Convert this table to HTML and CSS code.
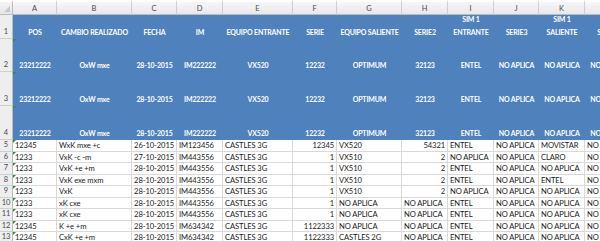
FILE: index.html
```html
<!DOCTYPE html>
<html lang="es">
<head>
<meta charset="utf-8">
<title>Hoja</title>
<link rel="stylesheet" href="styles.css">
</head>
<body>
<div class="sheet">
  <div class="corner"><span class="corner-tri"></span></div>
  <div class="ch">A</div><div class="ch">B</div><div class="ch">C</div><div class="ch">D</div><div class="ch">E</div><div class="ch">F</div><div class="ch">G</div><div class="ch">H</div><div class="ch">I</div><div class="ch">J</div><div class="ch">K</div><div class="ch">L</div>

  <div class="rh">1</div>
  <div class="hb">POS</div><div class="hb">CAMBIO REALIZADO</div><div class="hb">FECHA</div><div class="hb">IM</div><div class="hb">EQUIPO ENTRANTE</div><div class="hb">SERIE</div><div class="hb">EQUIPO SALIENTE</div><div class="hb">SERIE2</div><div class="hb">SIM 1<br>ENTRANTE</div><div class="hb">SERIE3</div><div class="hb">SIM 1<br>SALIENTE</div><div class="hb">SERIE4</div>

  <div class="rh">2</div>
  <div class="hb tcell"><span class="tri"></span>23212222</div><div class="hb">OxW mxe</div><div class="hb">28-10-2015</div><div class="hb">IM222222</div><div class="hb">VX520</div><div class="hb">12232</div><div class="hb">OPTIMUM</div><div class="hb">32123</div><div class="hb">ENTEL</div><div class="hb">NO APLICA</div><div class="hb">NO APLICA</div><div class="hb">NO APLICA</div>

  <div class="rh">3</div>
  <div class="hb tcell"><span class="tri"></span>23212222</div><div class="hb">OxW mxe</div><div class="hb">28-10-2015</div><div class="hb">IM222222</div><div class="hb">VX520</div><div class="hb">12232</div><div class="hb">OPTIMUM</div><div class="hb">32123</div><div class="hb">ENTEL</div><div class="hb">NO APLICA</div><div class="hb">NO APLICA</div><div class="hb">NO APLICA</div>

  <div class="rh">4</div>
  <div class="hb tcell"><span class="tri"></span>23212222</div><div class="hb">OxW mxe</div><div class="hb">28-10-2015</div><div class="hb">IM222222</div><div class="hb">VX520</div><div class="hb">12232</div><div class="hb">OPTIMUM</div><div class="hb">32123</div><div class="hb">ENTEL</div><div class="hb">NO APLICA</div><div class="hb">NO APLICA</div><div class="hb">NO APLICA</div>

  <div class="rh sm">5</div>
  <div class="c tcell"><span class="tri"></span>12345</div><div class="c">WxK mxe +c</div><div class="c r">26-10-2015</div><div class="c">IM123456</div><div class="c">CASTLES 3G</div><div class="c r">12345</div><div class="c">VX520</div><div class="c r">54321</div><div class="c">ENTEL</div><div class="c">NO APLICA</div><div class="c">MOVISTAR</div><div class="c">NO APLICA</div>

  <div class="rh sm">6</div>
  <div class="c tcell"><span class="tri"></span>1233</div><div class="c">VxK -c -m</div><div class="c r">27-10-2015</div><div class="c">IM443556</div><div class="c">CASTLES 3G</div><div class="c r">1</div><div class="c">VX510</div><div class="c r">2</div><div class="c">NO APLICA</div><div class="c">NO APLICA</div><div class="c">CLARO</div><div class="c">NO APLICA</div>

  <div class="rh sm">7</div>
  <div class="c tcell"><span class="tri"></span>1233</div><div class="c">VxK +e +m</div><div class="c r">28-10-2015</div><div class="c">IM443556</div><div class="c">CASTLES 3G</div><div class="c r">1</div><div class="c">VX510</div><div class="c r">2</div><div class="c">ENTEL</div><div class="c">NO APLICA</div><div class="c">NO APLICA</div><div class="c">NO APLICA</div>

  <div class="rh sm">8</div>
  <div class="c tcell"><span class="tri"></span>1233</div><div class="c">VxK exe mxm</div><div class="c r">28-10-2015</div><div class="c">IM443556</div><div class="c">CASTLES 3G</div><div class="c r">1</div><div class="c">VX510</div><div class="c r">2</div><div class="c">ENTEL</div><div class="c">NO APLICA</div><div class="c">ENTEL</div><div class="c">NO APLICA</div>

  <div class="rh sm">9</div>
  <div class="c tcell"><span class="tri"></span>1233</div><div class="c">VxK</div><div class="c r">28-10-2015</div><div class="c">IM443556</div><div class="c">CASTLES 3G</div><div class="c r">1</div><div class="c">VX510</div><div class="c r">2</div><div class="c">NO APLICA</div><div class="c">NO APLICA</div><div class="c">NO APLICA</div><div class="c">NO APLICA</div>

  <div class="rh sm">10</div>
  <div class="c tcell"><span class="tri"></span>1233</div><div class="c">xK cxe</div><div class="c r">28-10-2015</div><div class="c">IM443556</div><div class="c">CASTLES 3G</div><div class="c r">1</div><div class="c">NO APLICA</div><div class="c">NO APLICA</div><div class="c">ENTEL</div><div class="c">NO APLICA</div><div class="c">NO APLICA</div><div class="c">NO APLICA</div>

  <div class="rh sm">11</div>
  <div class="c tcell"><span class="tri"></span>1233</div><div class="c">xK cxe</div><div class="c r">28-10-2015</div><div class="c">IM443556</div><div class="c">CASTLES 3G</div><div class="c r">1</div><div class="c">NO APLICA</div><div class="c">NO APLICA</div><div class="c">ENTEL</div><div class="c">NO APLICA</div><div class="c">NO APLICA</div><div class="c">NO APLICA</div>

  <div class="rh sm">12</div>
  <div class="c tcell"><span class="tri"></span>12345</div><div class="c">K +e +m</div><div class="c r">28-10-2015</div><div class="c">IM634342</div><div class="c">CASTLES 3G</div><div class="c r">1122333</div><div class="c">NO APLICA</div><div class="c">NO APLICA</div><div class="c">ENTEL</div><div class="c">NO APLICA</div><div class="c">NO APLICA</div><div class="c">NO APLICA</div>

  <div class="rh sm">13</div>
  <div class="c tcell"><span class="tri"></span>12345</div><div class="c">CxK +e +m</div><div class="c r">28-10-2015</div><div class="c">IM634342</div><div class="c">CASTLES 3G</div><div class="c r">1122333</div><div class="c">CASTLES 2G</div><div class="c">NO APLICA</div><div class="c">ENTEL</div><div class="c">NO APLICA</div><div class="c">NO APLICA</div><div class="c">NO APLICA</div>
</div>
</body>
</html>
```
FILE: styles.css
```css
html, body {
  margin: 0;
  padding: 0;
  background: #ffffff;
  overflow: hidden;
}

.sheet {
  display: grid;
  grid-template-columns: 13px 44px 75px 45px 46px 70px 44px 65px 46px 46px 45px 46px 46px;
  grid-template-rows: 15px 24px 33px 34px 34px repeat(9, 11.5px);
  width: 631px;
  font-family: Lato, "Liberation Sans", sans-serif;
  font-size: 7.6px;
  letter-spacing: -0.1px;
  color: #1a1a1a;
}

.corner {
  position: relative;
  background: linear-gradient(#f4f4f4, #e6e6e6);
  border-right: 1px solid #bcbcbc;
  border-bottom: 1px solid #bcbcbc;
  border-top: 2px solid #ffffff;
  box-sizing: border-box;
}

.corner-tri {
  position: absolute;
  right: 2px;
  bottom: 2px;
  width: 0;
  height: 0;
  border-left: 6px solid transparent;
  border-bottom: 6px solid #c8c8c8;
}

.ch {
  background: linear-gradient(#f6f6f6, #e8e8e8);
  border-top: 2px solid #ffffff;
  border-right: 1px solid #cfcfcf;
  border-bottom: 1px solid #bcbcbc;
  box-sizing: border-box;
  display: flex;
  align-items: center;
  justify-content: center;
  font-size: 7.5px;
  letter-spacing: 0;
  color: #4a4a4a;
}

.rh {
  background: #eeeeee;
  border-right: 1px solid #bcbcbc;
  border-bottom: 1px solid #cfcfcf;
  box-sizing: border-box;
  display: flex;
  align-items: flex-end;
  justify-content: center;
  padding-bottom: 1px;
  font-size: 7.5px;
  letter-spacing: 0;
  line-height: 10px;
  color: #4a4a4a;
}

.rh.sm {
  align-items: center;
  padding-bottom: 0;
}

.hb {
  background: #4f81bd;
  color: #ffffff;
  font-weight: bold;
  font-size: 7px;
  letter-spacing: -0.15px;
  line-height: 12.5px;
  display: flex;
  align-items: flex-end;
  justify-content: center;
  text-align: center;
  white-space: nowrap;
  overflow: hidden;
  padding-bottom: 1px;
  box-sizing: border-box;
}

.c {
  border-right: 1px solid #d9d9d9;
  border-bottom: 1px solid #d9d9d9;
  box-sizing: border-box;
  padding: 0 2px;
  line-height: 10.5px;
  white-space: nowrap;
  overflow: hidden;
  display: flex;
  align-items: center;
}

.c.r {
  justify-content: flex-end;
}

.tcell {
  position: relative;
}

.tri {
  position: absolute;
  left: 0;
  top: 0;
  width: 0;
  height: 0;
  border-top: 3px solid #2e8b3a;
  border-right: 3px solid transparent;
}
```
